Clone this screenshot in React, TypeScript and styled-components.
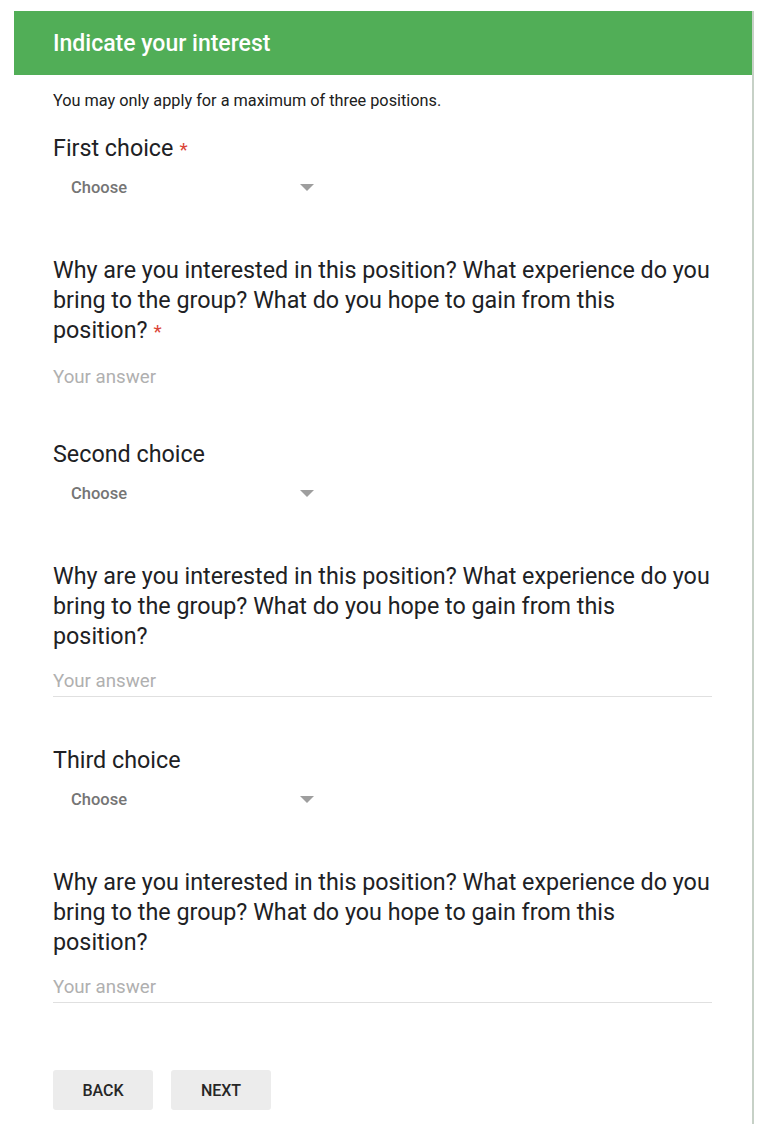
import React from "react";
import styled, { createGlobalStyle } from "styled-components";

const Global = createGlobalStyle`
  html, body { margin: 0; padding: 0; background: #ffffff; }
  body { font-family: Roboto, "Noto Sans", Arial, sans-serif; -webkit-font-smoothing: antialiased; }
  * { box-sizing: border-box; }
`;

const Page = styled.div`
  padding: 11px 0 0 14px;
  min-height: 1124px;
`;

const Card = styled.div`
  width: 740px;
  min-height: 1113px;
  border-right: 2px solid #c7d1c7;
  background: #fff;
`;

const Header = styled.div`
  height: 64px;
  background: #51ae57;
  display: flex;
  align-items: center;
  padding-left: 39px;
`;

const Title = styled.h1`
  margin: 0;
  font-size: 23px;
  font-weight: 500;
  color: #ffffff;
`;

const Body = styled.div`
  padding: 16px 40px 40px 39px;
  display: flex;
  flex-direction: column;
`;

const Description = styled.p`
  margin: 0 0 22px;
  font-size: 16.3px;
  line-height: 20px;
  color: #202020;
`;

const Item = styled.div<{ $after: number }>`
  display: flex;
  flex-direction: column;
  margin-bottom: ${(p) => p.$after}px;
`;

const QuestionTitle = styled.div`
  font-size: 23.3px;
  line-height: 30px;
  color: #202124;
`;

const Required = styled.span`
  display: inline-block;
  color: #db4437;
  font-size: 19px;
  line-height: 19px;
  margin-left: 6px;
`;

const SelectBox = styled.div`
  margin-top: 4px;
  width: 268px;
  height: 40px;
  display: flex;
  align-items: center;
  justify-content: space-between;
  padding: 0 7px 0 18px;
`;

const SelectText = styled.span`
  font-size: 16.5px;
  font-weight: 500;
  color: #757575;
`;

const AnswerInput = styled.div<{ $line: boolean; $gap: number }>`
  margin-top: ${(p) => p.$gap}px;
  height: 31px;
  display: flex;
  align-items: center;
  font-size: 18.7px;
  color: #b0b0b0;
  border-bottom: 1px solid ${(p) => (p.$line ? "#e0e0e0" : "transparent")};
`;

const Buttons = styled.div`
  margin-top: 20px;
  display: flex;
  gap: 18px;
`;

const Button = styled.button`
  width: 100px;
  height: 40px;
  border: none;
  border-radius: 3px;
  background: #ececec;
  font-family: Roboto, Arial, sans-serif;
  font-size: 16px;
  font-weight: 500;
  color: #262626;
  cursor: pointer;
`;

const Arrow = () => (
  <svg width="14" height="7" viewBox="0 0 14 7">
    <path d="M0 0 L14 0 L7 7 Z" fill="#9e9e9e" />
  </svg>
);

const SelectItem = ({ label, required }: { label: string; required?: boolean }) => (
  <Item $after={48}>
    <QuestionTitle>
      {label}
      {required && <Required>*</Required>}
    </QuestionTitle>
    <SelectBox>
      <SelectText>Choose</SelectText>
      <Arrow />
    </SelectBox>
  </Item>
);

const TextItem = ({ required, line, after }: { required?: boolean; line: boolean; after: number }) => (
  <Item $after={after}>
    <QuestionTitle>
      Why are you interested in this position? What experience do you bring to the group? What do you hope to gain from
      this position?
      {required && <Required>*</Required>}
    </QuestionTitle>
    <AnswerInput $line={line} $gap={required ? 17 : 15}>
      Your answer
    </AnswerInput>
  </Item>
);

export default function App() {
  return (
    <Page>
      <Global />
      <Card>
        <Header>
          <Title>Indicate your interest</Title>
        </Header>
        <Body>
          <Description>You may only apply for a maximum of three positions.</Description>
          <SelectItem label="First choice" required />
          <TextItem required line={false} after={46} />
          <SelectItem label="Second choice" />
          <TextItem line after={48} />
          <SelectItem label="Third choice" />
          <TextItem line after={47} />
          <Buttons>
            <Button>BACK</Button>
            <Button>NEXT</Button>
          </Buttons>
        </Body>
      </Card>
    </Page>
  );
}
